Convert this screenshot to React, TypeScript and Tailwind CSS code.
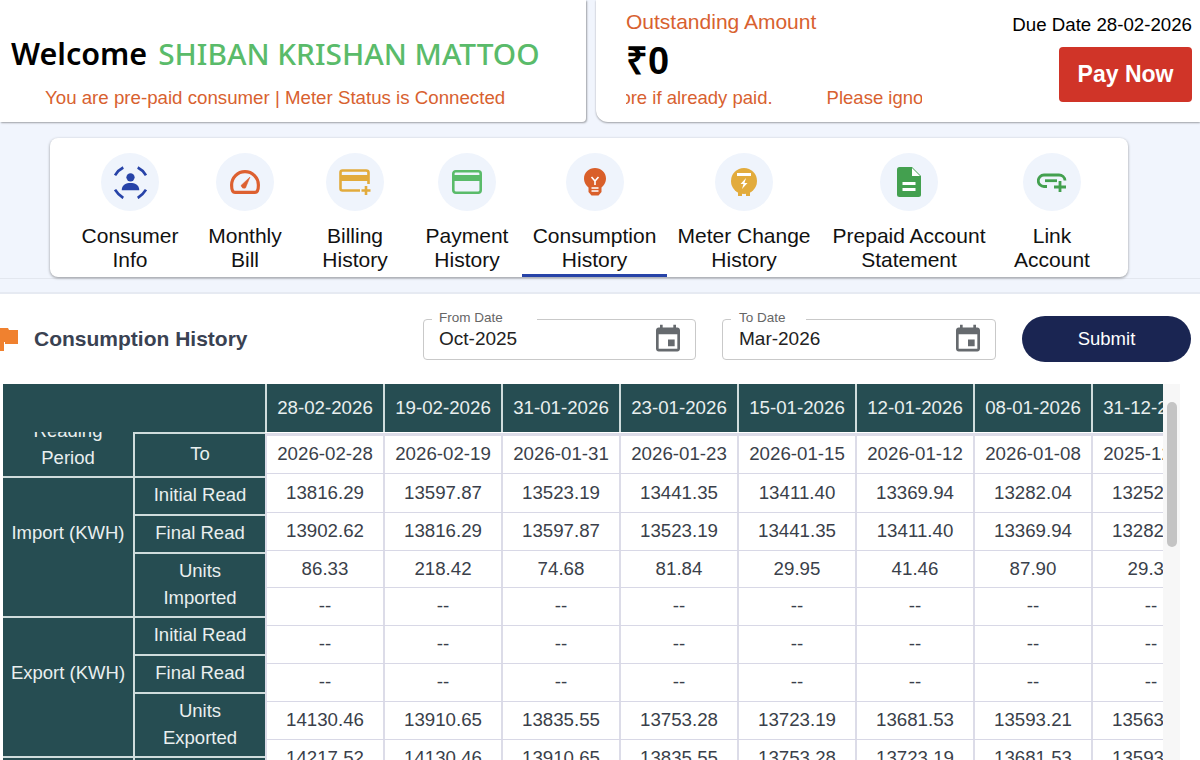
import type { ReactNode } from "react";

const icons: Record<string, ReactNode> = {
  consumer: (
    <svg viewBox="0 0 32 32" className="h-[33px] w-[33px] text-[#2743a8]" fill="none" stroke="currentColor" strokeWidth="2.6">
      <path d="M1 9 Q4 4 9 1.5" />
      <path d="M23 1.5 Q28 4 31 9" />
      <path d="M1 23 Q4 28 9 31" />
      <path d="M23 31 Q28 28 31 23" />
      <circle cx="16" cy="11" r="4" fill="currentColor" stroke="none" />
      <path d="M7.5 23.5 C7.5 18 12 16.5 16 16.5 C20 16.5 24.5 18 24.5 23.5 Z" fill="currentColor" stroke="none" />
    </svg>
  ),
  gauge: (
    <svg viewBox="0 0 30 24" className="h-[24px] w-[30px] text-[#dd6030]" fill="none" stroke="currentColor" strokeWidth="3.2" strokeLinejoin="round">
      <path d="M5 22.4 Q1.6 22.4 1.6 15 A13.4 13.4 0 0 1 28.4 15 Q28.4 22.4 25 22.4 Z" />
      <path d="M11 15.5 L20 7 L15.5 18 Q12 19 11 15.5 Z" fill="currentColor" strokeWidth="0.5" />
    </svg>
  ),
  billing: (
    <svg viewBox="0 0 32 26" className="h-[26px] w-[32px] text-[#e2ab3c]" fill="none" stroke="currentColor" strokeWidth="2.6">
      <path d="M21 21.5 H3.5 Q1.5 21.5 1.5 19.5 V3.5 Q1.5 1.5 3.5 1.5 H27 Q29.5 1.5 29.5 3.5 V15" />
      <rect x="1.5" y="6" width="28" height="6" fill="currentColor" stroke="none" />
      <path d="M22.5 21.5 H31.5 M27 17 V26" />
    </svg>
  ),
  payment: (
    <svg viewBox="0 0 30 24" className="h-[24px] w-[30px] text-[#5abb6a]" fill="none" stroke="currentColor" strokeWidth="2.6">
      <rect x="1.3" y="1.3" width="27.4" height="21.4" rx="2.4" />
      <rect x="1.3" y="5" width="27.4" height="6" fill="currentColor" stroke="none" />
    </svg>
  ),
  bulb: (
    <svg viewBox="0 0 22 28" className="h-[28px] w-[22px]">
      <path d="M11 0 C17 0 22 4.5 22 10.5 C22 15 19.5 17.5 17.5 19.5 L17.5 24 L14.5 27.5 H7.5 L4.5 24 L4.5 19.5 C2.5 17.5 0 15 0 10.5 C0 4.5 5 0 11 0 Z" fill="#d95f2a" />
      <path d="M7.5 9 L11 13 L14.5 9 M11 13 V17" fill="none" stroke="#fff" strokeWidth="1.6" />
      <path d="M7.5 20 H14.5 M7.5 23 H14.5" stroke="#fff" strokeWidth="1.4" />
    </svg>
  ),
  meter: (
    <svg viewBox="0 0 26 28" className="h-[28px] w-[26px]">
      <circle cx="13" cy="13" r="13" fill="#e2ab3c" />
      <path d="M7 23 H11 V28 H7 Z M15 23 H19 V28 H15 Z" fill="#e2ab3c" />
      <rect x="6" y="5" width="14" height="3" fill="#fff" />
      <path d="M15 10 L9.5 16 H12.5 L11 21 L16.5 15 H13.5 Z" fill="#fff" />
    </svg>
  ),
  doc: (
    <svg viewBox="0 0 24 30" className="h-[30px] w-[24px]">
      <path d="M2.5 0 H15 L24 9 V27.5 Q24 30 21.5 30 H2.5 Q0 30 0 27.5 V2.5 Q0 0 2.5 0 Z" fill="#43a04f" />
      <path d="M15 1 V9 H23" fill="#fff" />
      <rect x="5.5" y="15" width="13" height="3" fill="#fff" />
      <rect x="5.5" y="21" width="13" height="3" fill="#fff" />
    </svg>
  ),
  link: (
    <svg viewBox="0 0 30 20" className="h-[20px] w-[30px] text-[#43a04f]" fill="none" stroke="currentColor" strokeWidth="2.8">
      <path d="M10 14.5 H7 A5.7 5.7 0 0 1 7 3 H22 A6 6 0 0 1 28 8.5" />
      <path d="M8 8.7 H20" />
      <path d="M17 15 H29 M23 9 V20" />
    </svg>
  ),
};

const tabs = [
  { key: "consumer", a: "Consumer", b: "Info", width: "w-[124px]" },
  { key: "gauge", a: "Monthly", b: "Bill", width: "w-[106px]" },
  { key: "billing", a: "Billing", b: "History", width: "w-[114px]" },
  { key: "payment", a: "Payment", b: "History", width: "w-[110px]" },
  { key: "bulb", a: "Consumption", b: "History", width: "w-[145px]", active: true },
  { key: "meter", a: "Meter Change", b: "History", width: "w-[154px]" },
  { key: "doc", a: "Prepaid Account", b: "Statement", width: "w-[176px]" },
  { key: "link", a: "Link", b: "Account", width: "w-[110px]" },
];

const dash = ["--", "--", "--", "--", "--", "--", "--", "--"];

const rows = [
  { h: "h-[38px]", cells: ["2026-02-28", "2026-02-19", "2026-01-31", "2026-01-23", "2026-01-15", "2026-01-12", "2026-01-08", "2025-12-31"] },
  { h: "h-[39px]", cells: ["13816.29", "13597.87", "13523.19", "13441.35", "13411.40", "13369.94", "13282.04", "13252.70"] },
  { h: "h-[38px]", cells: ["13902.62", "13816.29", "13597.87", "13523.19", "13441.35", "13411.40", "13369.94", "13282.04"] },
  { h: "h-[37px]", cells: ["86.33", "218.42", "74.68", "81.84", "29.95", "41.46", "87.90", "29.34"] },
  { h: "h-[38px]", cells: dash },
  { h: "h-[38px]", cells: dash },
  { h: "h-[38px]", cells: dash },
  { h: "h-[38px]", cells: ["14130.46", "13910.65", "13835.55", "13753.28", "13723.19", "13681.53", "13593.21", "13563.87"] },
  { h: "h-[38px]", cells: ["14217.52", "14130.46", "13910.65", "13835.55", "13753.28", "13723.19", "13681.53", "13593.21"] },
];

const headDates = ["28-02-2026", "19-02-2026", "31-01-2026", "23-01-2026", "15-01-2026", "12-01-2026", "08-01-2026", "31-12-2025"];

function CalendarIcon() {
  return (
    <svg viewBox="0 0 24 24" className="h-[33px] w-[32px] fill-[#666a6e]">
      <path d="M17 12h-5v5h5v-5zM16 1v2H8V1H6v2H5c-1.11 0-1.99.9-1.99 2L3 19c0 1.1.89 2 2 2h14c1.1 0 2-.9 2-2V5c0-1.1-.9-2-2-2h-1V1h-2zm3 18H5V8h14v11z" />
    </svg>
  );
}

function DateField({ label, value, box, labelBox }: { label: string; value: string; box: string; labelBox: string }) {
  return (
    <div className={`relative flex h-[41px] items-center justify-between rounded border border-[#c9c9c9] pr-[11px] ${box}`}>
      <span className={`absolute -top-[10px] left-[8px] bg-white text-[13.5px] leading-[16px] text-[#666] ${labelBox}`}>{label}</span>
      <span className="mt-[1px] text-[19px] text-[#222]">{value}</span>
      <CalendarIcon />
    </div>
  );
}

function HeadCell({ children, className }: { children: ReactNode; className: string }) {
  return <div className={`flex items-center justify-center border-t-2 border-[#cfdcdc] pb-[3px] text-center ${className}`}>{children}</div>;
}

export default function App() {
  return (
    <div className="h-[760px] w-[1200px] overflow-hidden bg-white font-['Liberation_Sans',sans-serif]">
      <div className="bg-[#f1f5fd]">
        <div className="flex h-[122px] gap-[10px]">
          <div className="w-[586px] rounded-br bg-white pl-[11px] shadow-[1px_1px_2px_rgba(0,0,0,0.35)]">
            <div className="flex items-baseline gap-[11px] pt-[33px] font-['Noto_Sans',sans-serif] leading-[40px]">
              <span className="text-[30.5px] font-semibold text-black">Welcome</span>
              <span className="text-[29.8px] font-medium text-[#5abb6a]">SHIBAN KRISHAN MATTOO</span>
            </div>
            <div className="mt-[11px] pl-[34px] text-[18.7px] leading-[26px] text-[#d8612f]">You are pre-paid consumer | Meter Status is Connected</div>
          </div>
          <div className="flex flex-1 justify-between rounded-bl-xl bg-white pl-[30px] pr-[8px] shadow-[0_1px_2px_rgba(0,0,0,0.35)]">
            <div className="w-[296px]">
              <div className="pt-[10px] text-[21px] leading-[24px] text-[#d8612f]">Outstanding Amount</div>
              <div className="pt-[4px] text-[38px] font-bold leading-[46px] text-black">₹0</div>
              <div className="mt-[1px] overflow-hidden">
                <div className="-ml-[92px] flex gap-[54px] whitespace-nowrap text-[18.5px] leading-[26px] text-[#d8612f]">
                  <span>Please ignore if already paid.</span>
                  <span>Please ignore if already paid.</span>
                </div>
              </div>
            </div>
            <div className="flex flex-col items-end">
              <div className="pt-[13px] text-[18.7px] leading-[24px] text-black">Due Date 28-02-2026</div>
              <button type="button" className="mt-[10px] h-[55px] w-[133px] rounded bg-[#d03428] text-[23px] font-bold text-white">Pay Now</button>
            </div>
          </div>
        </div>
        <div className="border-b border-[#e3e7ef] pb-[1px] pl-[50px] pt-[16px]">
          <div className="flex h-[139px] w-[1078px] rounded-lg bg-white pl-[18px] shadow-[0_1px_3px_rgba(0,0,0,0.4)]">
            {tabs.map((t) => (
              <div key={t.key} className={`relative flex flex-col items-center pt-[15px] ${t.width}`}>
                <div className="flex h-[58px] w-[58px] items-center justify-center rounded-full bg-[#eff4fc]">{icons[t.key]}</div>
                <div className="mt-[13px] whitespace-nowrap text-center text-[21px] leading-[24px] text-[#111]">
                  <div>{t.a}</div>
                  <div>{t.b}</div>
                </div>
                {t.active && <div className="absolute bottom-0 left-0 right-0 h-[3px] bg-[#2743a8]" />}
              </div>
            ))}
          </div>
        </div>
        <div className="h-[15px] border-b-2 border-[#e6eaf2]" />
      </div>

      <div className="flex h-[90px] items-center pr-[9px]">
        <svg viewBox="0 0 19 23" className="h-[23px] w-[19px] fill-[#f0812f]">
          <path d="M0 0 H8 L9 2 H18 V16 H5 V14 H4 V23 H0 Z" />
        </svg>
        <h2 className="ml-[15px] w-[389px] text-[21px] font-bold text-[#3a4252]">Consumption History</h2>
        <DateField label="From Date" value="Oct-2025" box="w-[273px] pl-[15px]" labelBox="pl-[7px] pr-[34px]" />
        <div className="w-[26px]" />
        <DateField label="To Date" value="Mar-2026" box="w-[274px] pl-[16px]" labelBox="pl-[8px] pr-[20px]" />
        <button type="button" className="ml-[26px] h-[46px] w-[169px] rounded-full bg-[#1a2552] text-[18.5px] text-white">Submit</button>
      </div>

      <div className="flex pl-[3px] text-[18.5px]">
        <div className="flex w-[1160px] overflow-hidden">
          <div className="w-[262px] shrink-0 bg-[#264d52] leading-[27px] text-[#e9efef]">
            <div className="h-[48px]" />
            <div className="flex">
              <div className="w-[132px] border-r-2 border-[#cfdcdc]">
                <div className="flex h-[44px] flex-col items-center justify-end overflow-hidden pb-[5px]">
                  <div>Reading</div>
                  <div>Period</div>
                </div>
                <div className="h-[140px] border-t-2 border-[#cfdcdc] pt-[41px] text-center">Import (KWH)</div>
                <div className="h-[140px] border-t-2 border-[#cfdcdc] pt-[41px] text-center">Export (KWH)</div>
                <HeadCell className="h-[40px]">&nbsp;</HeadCell>
              </div>
              <div className="flex-1">
                <HeadCell className="h-[44px]">To</HeadCell>
                <HeadCell className="h-[38px]">Initial Read</HeadCell>
                <HeadCell className="h-[38px]">Final Read</HeadCell>
                <HeadCell className="h-[64px]">Units<br />Imported</HeadCell>
                <HeadCell className="h-[38px]">Initial Read</HeadCell>
                <HeadCell className="h-[38px]">Final Read</HeadCell>
                <HeadCell className="h-[64px]">Units<br />Exported</HeadCell>
                <HeadCell className="h-[40px]">&nbsp;</HeadCell>
              </div>
            </div>
          </div>
          <div className="shrink-0 text-[18.7px]">
            <div className="flex h-[52px] border-b-[3px] border-[#dcdce8] bg-white">
              {headDates.map((d) => (
                <div key={d} className="flex h-[48px] w-[118px] items-center justify-center border-l-2 border-[#cfdcdc] bg-[#264d52] text-[#e9efef]">{d}</div>
              ))}
            </div>
            {rows.map((row, i) => (
              <div key={i} className={`flex border-b border-[#d8d8e6] ${row.h}`}>
                {row.cells.map((v, j) => (
                  <div key={j} className="flex w-[118px] items-center justify-center border-l-2 border-[#dcdce8] text-[#3a3f4a]">{v}</div>
                ))}
              </div>
            ))}
          </div>
        </div>
        <div className="h-[376px] w-[17px] bg-[#f7f7f7] pl-[4px] pt-[18px]">
          <div className="h-[145px] w-[10px] rounded-full bg-[#c4c4c4]" />
        </div>
      </div>
    </div>
  );
}
